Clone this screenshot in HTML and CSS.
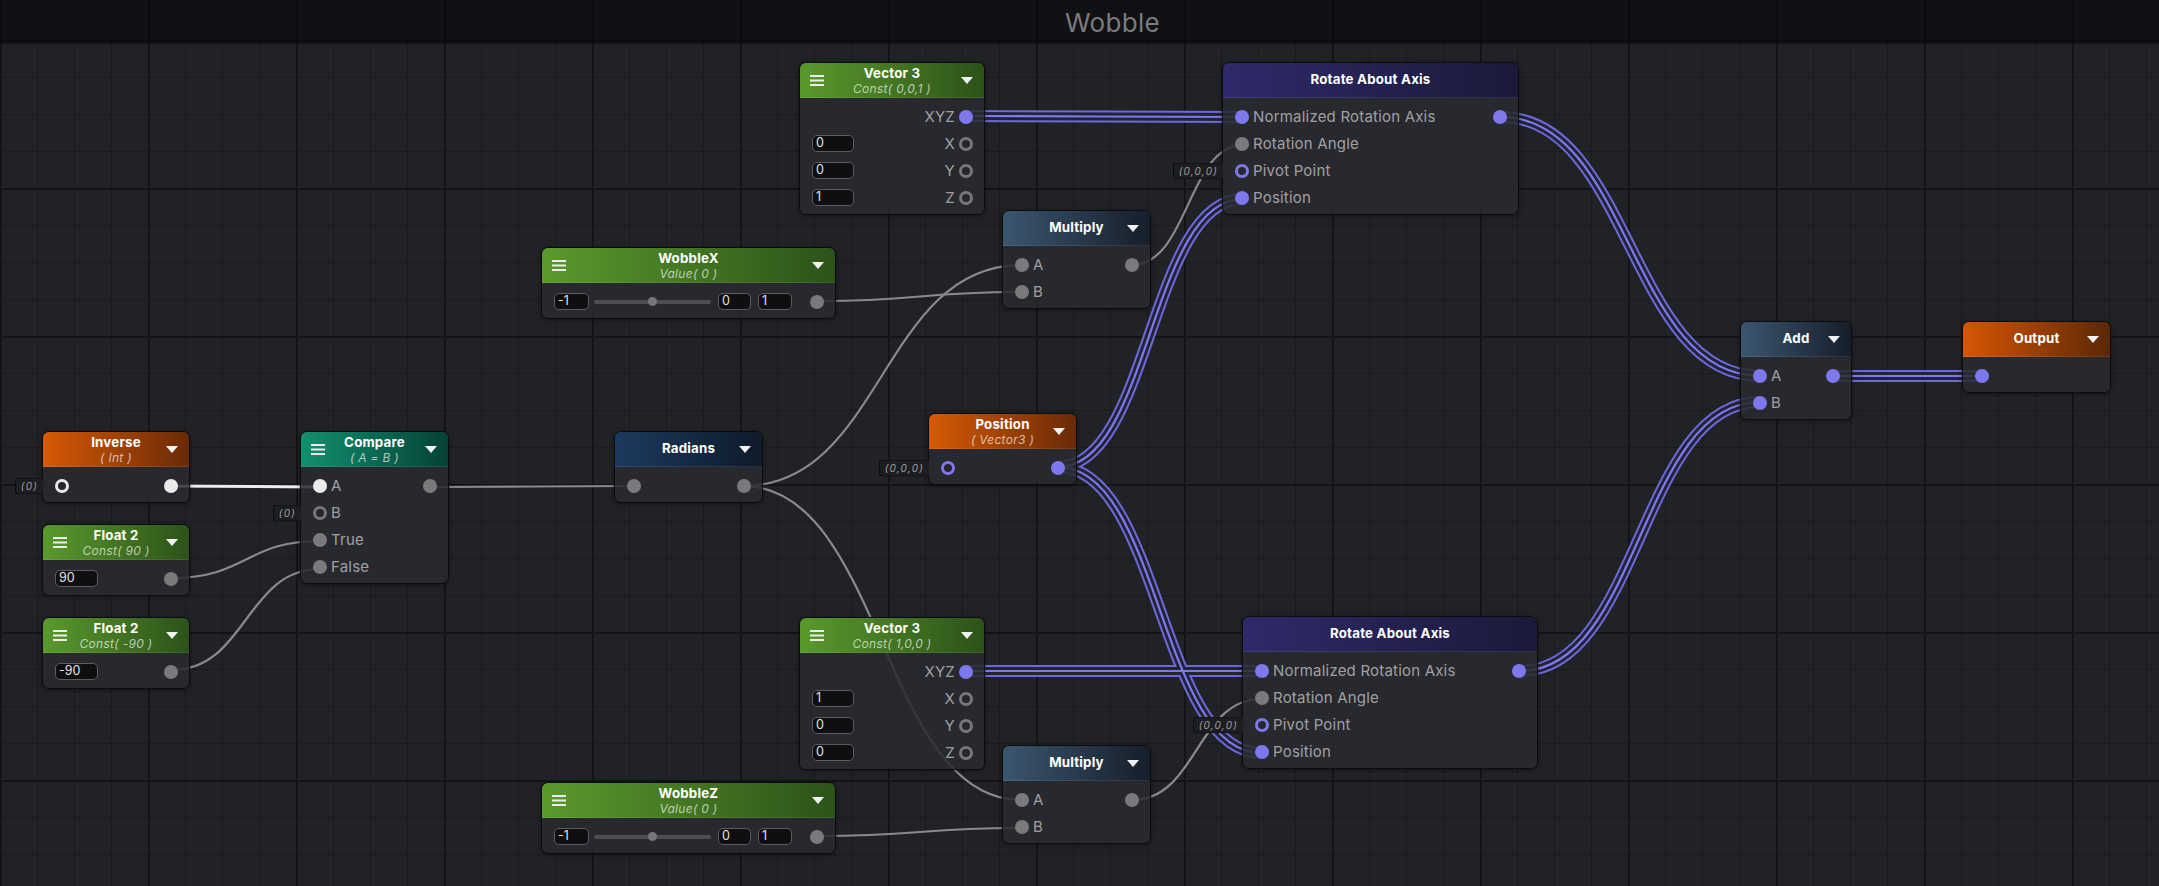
FILE: index.html
```html
<!DOCTYPE html>
<html>
<head>
<meta charset="utf-8">
<link rel="stylesheet" href="styles.css">
</head>
<body>
<div class="editor">
  <div class="titlebar">Wobble</div>
  <div class="graph">
    <svg class="wires" width="2159" height="886" viewBox="0 0 2159 886">
      <defs>
        <path id="p1" d="M966 116 C1104 116 1104 117 1243 117"/>
        <path id="p2" d="M1058 467 C1150 467 1150 199 1243 199"/>
        <path id="p3" d="M1058 467 C1160 467 1160 753 1261 753"/>
        <path id="p4" d="M966 671 L1261 671"/>
        <path id="p5" d="M1501 117 C1630 117 1630 376 1760 376"/>
        <path id="p6" d="M1520 671 C1640 671 1640 402 1760 402"/>
        <path id="p7" d="M1834 376 L1981 376"/>
      </defs>
      <g class="gray">
        <path d="M172 578 C246 578 246 541 320 541"/>
        <path d="M172 670 C246 670 246 569 320 569"/>
        <path d="M431 487 C532 487 532 486 633 486"/>
        <path d="M743 486 C882 486 882 265 1021 265"/>
        <path d="M743 486 C882 486 882 800 1021 800"/>
        <path d="M818 301 C920 301 920 292 1021 292"/>
        <path d="M818 836 C920 836 920 828 1021 828"/>
        <path d="M1132 265 C1188 265 1188 145 1243 145"/>
        <path d="M1132 800 C1197 800 1197 699 1261 699"/>
      </g>
      <path class="white" d="M172 486 L320 487"/>
      <g class="vo">
        <use href="#p1"/><use href="#p2"/><use href="#p3"/><use href="#p4"/><use href="#p5"/><use href="#p6"/><use href="#p7"/>
      </g>
      <g class="vg">
        <use href="#p1"/><use href="#p2"/><use href="#p3"/><use href="#p4"/><use href="#p5"/><use href="#p6"/><use href="#p7"/>
      </g>
      <g class="vc">
        <use href="#p1"/><use href="#p2"/><use href="#p3"/><use href="#p4"/><use href="#p5"/><use href="#p6"/><use href="#p7"/>
      </g>
    </svg>

    <!-- Vector 3 (top) -->
    <div class="node n-vec3a">
      <div class="head two green">
        <span class="menu"><svg width="14" height="11" viewBox="0 0 14 11"><rect y="0" width="14" height="2"/><rect y="4.5" width="14" height="2"/><rect y="9" width="14" height="2"/></svg></span>
        <div class="title"><b>Vector 3</b><i>Const( 0,0,1 )</i></div>
        <span class="drop"></span>
      </div>
      <div class="body">
        <div class="row"><span class="lbl right">XYZ</span><span class="port purple"></span></div>
        <div class="row"><span class="field f42">0</span><span class="lbl right">X</span><span class="port gring"></span></div>
        <div class="row"><span class="field f42">0</span><span class="lbl right">Y</span><span class="port gring"></span></div>
        <div class="row"><span class="field f42">1</span><span class="lbl right">Z</span><span class="port gring"></span></div>
      </div>
    </div>

    <!-- Rotate About Axis (top) -->
    <div class="node n-rota">
      <div class="head indigo">
        <span></span>
        <div class="title"><b>Rotate About Axis</b></div>
        <span></span>
      </div>
      <div class="body">
        <div class="row"><span class="port purple"></span><span class="lbl">Normalized Rotation Axis</span><span class="sp"></span><span class="port purple"></span></div>
        <div class="row"><span class="port gray"></span><span class="lbl">Rotation Angle</span></div>
        <div class="row"><span class="tag">(0,0,0)</span><span class="port pring"></span><span class="lbl">Pivot Point</span></div>
        <div class="row"><span class="port purple"></span><span class="lbl">Position</span></div>
      </div>
    </div>

    <!-- WobbleX -->
    <div class="node n-wobx">
      <div class="head two green">
        <span class="menu"><svg width="14" height="11" viewBox="0 0 14 11"><rect y="0" width="14" height="2"/><rect y="4.5" width="14" height="2"/><rect y="9" width="14" height="2"/></svg></span>
        <div class="title"><b>WobbleX</b><i>Value( 0 )</i></div>
        <span class="drop"></span>
      </div>
      <div class="body">
        <div class="row">
          <span class="field f35">-1</span>
          <span class="slider"><span class="knob"></span></span>
          <span class="field f33">0</span>
          <span class="field f34">1</span>
          <span class="sp"></span>
          <span class="port gray"></span>
        </div>
      </div>
    </div>

    <!-- Multiply (top) -->
    <div class="node n-mula">
      <div class="head slate">
        <span></span>
        <div class="title"><b>Multiply</b></div>
        <span class="drop"></span>
      </div>
      <div class="body">
        <div class="row"><span class="port gray"></span><span class="lbl">A</span><span class="sp"></span><span class="port gray"></span></div>
        <div class="row"><span class="port gray"></span><span class="lbl">B</span></div>
      </div>
    </div>

    <!-- Inverse -->
    <div class="node n-inv">
      <div class="head two orange">
        <span></span>
        <div class="title"><b>Inverse</b><i>( Int )</i></div>
        <span class="drop"></span>
      </div>
      <div class="body">
        <div class="row"><span class="tag">(0)</span><span class="port wring"></span><span class="sp"></span><span class="port white"></span></div>
      </div>
    </div>

    <!-- Float 2 (90) -->
    <div class="node n-f90">
      <div class="head two green">
        <span class="menu"><svg width="14" height="11" viewBox="0 0 14 11"><rect y="0" width="14" height="2"/><rect y="4.5" width="14" height="2"/><rect y="9" width="14" height="2"/></svg></span>
        <div class="title"><b>Float 2</b><i>Const( 90 )</i></div>
        <span class="drop"></span>
      </div>
      <div class="body">
        <div class="row"><span class="field f43">90</span><span class="sp"></span><span class="port gray"></span></div>
      </div>
    </div>

    <!-- Float 2 (-90) -->
    <div class="node n-fm90">
      <div class="head two green">
        <span class="menu"><svg width="14" height="11" viewBox="0 0 14 11"><rect y="0" width="14" height="2"/><rect y="4.5" width="14" height="2"/><rect y="9" width="14" height="2"/></svg></span>
        <div class="title"><b>Float 2</b><i>Const( -90 )</i></div>
        <span class="drop"></span>
      </div>
      <div class="body">
        <div class="row"><span class="field f43">-90</span><span class="sp"></span><span class="port gray"></span></div>
      </div>
    </div>

    <!-- Compare -->
    <div class="node n-cmp">
      <div class="head two teal">
        <span class="menu"><svg width="14" height="11" viewBox="0 0 14 11"><rect y="0" width="14" height="2"/><rect y="4.5" width="14" height="2"/><rect y="9" width="14" height="2"/></svg></span>
        <div class="title"><b>Compare</b><i>( A = B )</i></div>
        <span class="drop"></span>
      </div>
      <div class="body">
        <div class="row"><span class="port white"></span><span class="lbl">A</span><span class="sp"></span><span class="port gray"></span></div>
        <div class="row"><span class="tag">(0)</span><span class="port gring"></span><span class="lbl">B</span></div>
        <div class="row"><span class="port gray"></span><span class="lbl">True</span></div>
        <div class="row"><span class="port gray"></span><span class="lbl">False</span></div>
      </div>
    </div>

    <!-- Radians -->
    <div class="node n-rad">
      <div class="head navy">
        <span></span>
        <div class="title"><b>Radians</b></div>
        <span class="drop"></span>
      </div>
      <div class="body">
        <div class="row"><span class="port gray"></span><span class="sp"></span><span class="port gray"></span></div>
      </div>
    </div>

    <!-- Position -->
    <div class="node n-pos">
      <div class="head two orange">
        <span></span>
        <div class="title"><b>Position</b><i>( Vector3 )</i></div>
        <span class="drop"></span>
      </div>
      <div class="body">
        <div class="row"><span class="tag">(0,0,0)</span><span class="port pring"></span><span class="sp"></span><span class="port purple"></span></div>
      </div>
    </div>

    <!-- Add -->
    <div class="node n-add">
      <div class="head slate">
        <span></span>
        <div class="title"><b>Add</b></div>
        <span class="drop"></span>
      </div>
      <div class="body">
        <div class="row"><span class="port purple"></span><span class="lbl">A</span><span class="sp"></span><span class="port purple"></span></div>
        <div class="row"><span class="port purple"></span><span class="lbl">B</span></div>
      </div>
    </div>

    <!-- Output -->
    <div class="node n-out">
      <div class="head orange2">
        <span></span>
        <div class="title"><b>Output</b></div>
        <span class="drop"></span>
      </div>
      <div class="body">
        <div class="row"><span class="port purple"></span></div>
      </div>
    </div>

    <!-- Vector 3 (bottom) -->
    <div class="node n-vec3b">
      <div class="head two green">
        <span class="menu"><svg width="14" height="11" viewBox="0 0 14 11"><rect y="0" width="14" height="2"/><rect y="4.5" width="14" height="2"/><rect y="9" width="14" height="2"/></svg></span>
        <div class="title"><b>Vector 3</b><i>Const( 1,0,0 )</i></div>
        <span class="drop"></span>
      </div>
      <div class="body">
        <div class="row"><span class="lbl right">XYZ</span><span class="port purple"></span></div>
        <div class="row"><span class="field f42">1</span><span class="lbl right">X</span><span class="port gring"></span></div>
        <div class="row"><span class="field f42">0</span><span class="lbl right">Y</span><span class="port gring"></span></div>
        <div class="row"><span class="field f42">0</span><span class="lbl right">Z</span><span class="port gring"></span></div>
      </div>
    </div>

    <!-- Multiply (bottom) -->
    <div class="node n-mulb">
      <div class="head slate">
        <span></span>
        <div class="title"><b>Multiply</b></div>
        <span class="drop"></span>
      </div>
      <div class="body">
        <div class="row"><span class="port gray"></span><span class="lbl">A</span><span class="sp"></span><span class="port gray"></span></div>
        <div class="row"><span class="port gray"></span><span class="lbl">B</span></div>
      </div>
    </div>

    <!-- WobbleZ -->
    <div class="node n-wobz">
      <div class="head two green">
        <span class="menu"><svg width="14" height="11" viewBox="0 0 14 11"><rect y="0" width="14" height="2"/><rect y="4.5" width="14" height="2"/><rect y="9" width="14" height="2"/></svg></span>
        <div class="title"><b>WobbleZ</b><i>Value( 0 )</i></div>
        <span class="drop"></span>
      </div>
      <div class="body">
        <div class="row">
          <span class="field f35">-1</span>
          <span class="slider"><span class="knob"></span></span>
          <span class="field f33">0</span>
          <span class="field f34">1</span>
          <span class="sp"></span>
          <span class="port gray"></span>
        </div>
      </div>
    </div>

    <!-- Rotate About Axis (bottom) -->
    <div class="node n-rotb">
      <div class="head indigo">
        <span></span>
        <div class="title"><b>Rotate About Axis</b></div>
        <span></span>
      </div>
      <div class="body">
        <div class="row"><span class="port purple"></span><span class="lbl">Normalized Rotation Axis</span><span class="sp"></span><span class="port purple"></span></div>
        <div class="row"><span class="port gray"></span><span class="lbl">Rotation Angle</span></div>
        <div class="row"><span class="tag">(0,0,0)</span><span class="port pring"></span><span class="lbl">Pivot Point</span></div>
        <div class="row"><span class="port purple"></span><span class="lbl">Position</span></div>
      </div>
    </div>
  </div>
</div>
</body>
</html>
```

FILE: styles.css
```css
* { box-sizing: border-box; }

body {
  margin: 0;
  background: #1f2023;
  font-family: Inter, "Noto Sans", "Liberation Sans", sans-serif;
}

.editor {
  position: relative;
  width: 2159px;
  height: 886px;
  overflow: hidden;
  background-color: #212226;
  background-image:
    linear-gradient(to right, #131416 2px, transparent 2px),
    linear-gradient(to bottom, #131416 2px, transparent 2px),
    linear-gradient(to right, #1a1b1e 1px, transparent 1px),
    linear-gradient(to bottom, #1a1b1e 1px, transparent 1px);
  background-size: 148px 148px, 148px 148px, 37px 37px, 37px 37px;
  background-position: 0 40px, 0 40px, 0 40px, 0 40px;
}

.titlebar {
  position: relative;
  z-index: 3;
  height: 44px;
  padding-left: 66px;
  background: rgba(6, 7, 9, 0.62);
  display: flex;
  align-items: center;
  justify-content: center;
  color: #7b7b7d;
  font-size: 26px;
  letter-spacing: 0.3px;
}

.graph {
  position: absolute;
  inset: 0;
}

.wires {
  position: absolute;
  left: 0;
  top: 0;
  fill: none;
}

.wires .gray path { stroke: #8a8a8c; stroke-width: 2.2; }
.wires .white { stroke: #ececec; stroke-width: 3; }
.wires .vo use { stroke: #6e69d8; stroke-width: 12; }
.wires .vg use { stroke: #232336; stroke-width: 8; }
.wires .vc use { stroke: #7f7aec; stroke-width: 2.2; }

/* nodes */
.node {
  position: absolute;
  border: 1px solid #0c0c0e;
  border-radius: 7px;
  background: rgba(42, 43, 48, 0.86);
  box-shadow: 0 1px 4px rgba(0, 0, 0, 0.45);
}

.head {
  height: 35px;
  padding-bottom: 4px;
  display: grid;
  grid-template-columns: 34px 1fr 34px;
  align-items: center;
  border-radius: 6px 6px 0 0;
  box-shadow: inset 0 -1px 0 rgba(255, 255, 255, 0.09);
}

.head .menu, .head .drop { margin-top: 4px; }

.head.two { padding-bottom: 0; }
.head.two .menu, .head.two .drop { margin-top: 0; }

.green  { background: linear-gradient(to right, #5a9a2c, #2c5219); }
.orange { background: linear-gradient(to right, #d65a04, #6a2a06); }
.orange2{ background: linear-gradient(to right, #d85604, #5a2707); }
.teal   { background: linear-gradient(to right, #129070, #054236); }
.navy   { background: linear-gradient(to right, #1c3a5f, #0f1a2a); }
.slate  { background: linear-gradient(to right, #3b5670, #161e29); }
.indigo { background: linear-gradient(to right, #2e2a6a, #1b1939); }

.menu {
  display: flex;
  justify-content: center;
  fill: #ececec;
}

.title {
  grid-column: 2;
  display: flex;
  flex-direction: column;
  align-items: center;
  white-space: nowrap;
}

.title b {
  font-size: 13.3px;
  line-height: 14px;
  font-weight: 700;
  color: #ffffff;
  letter-spacing: 0.2px;
}

.title i {
  font-size: 12px;
  line-height: 15px;
  margin-top: 1px;
  color: rgba(255, 255, 255, 0.66);
  letter-spacing: 0.3px;
}

.drop {
  grid-column: 3;
  justify-self: center;
  width: 0;
  height: 0;
  border-left: 6px solid transparent;
  border-right: 6px solid transparent;
  border-top: 7px solid #f2f2f2;
}

.body {
  padding: 5px 0 3px;
}

.row {
  position: relative;
  height: 27px;
  display: flex;
  align-items: center;
  padding: 0 11px 0 12px;
}

.lbl {
  font-size: 15px;
  color: #a0a0a2;
  margin-left: 4px;
  white-space: nowrap;
  letter-spacing: 0.2px;
}

.lbl.right {
  margin-left: auto;
  margin-right: 4px;
}

.sp { flex: 1; }

.port {
  flex: none;
  width: 14px;
  height: 14px;
  border-radius: 50%;
}

.port.gray   { background: #7a7a7c; }
.port.purple { background: #7d79ec; }
.port.white  { background: #ebebeb; }
.port.pring  { border: 3px solid #7d79ec; background: #26272b; }
.port.gring  { border: 3px solid #77777a; background: #26272b; }
.port.wring  { border: 3px solid #e8e8e8; background: #26272b; }

.field {
  flex: none;
  height: 17px;
  border: 1.5px solid #5c5c5e;
  border-radius: 5px;
  background: #0f0f11;
  color: #e2e2e2;
  font-size: 12.5px;
  line-height: 14px;
  padding-left: 3px;
}

.f42 { width: 42px; }
.f43 { width: 43px; }
.f35 { width: 35px; }
.f33 { width: 33px; margin-left: 7px; }
.f34 { width: 34px; margin-left: 7px; }

.slider {
  position: relative;
  flex: none;
  width: 117px;
  height: 4px;
  margin-left: 5px;
  border-radius: 2px;
  background: #4e4e52;
  display: flex;
  align-items: center;
  justify-content: center;
}

.knob {
  width: 9px;
  height: 9px;
  border-radius: 50%;
  background: #77777a;
}

.tag {
  position: absolute;
  right: 100%;
  top: 50%;
  transform: translateY(-50%);
  height: 17px;
  padding: 0 5px;
  display: flex;
  align-items: center;
  border: 1px solid #0c0c0e;
  border-right: none;
  border-radius: 4px 0 0 4px;
  background: #1d1e21;
  color: #9e9ea0;
  font-size: 10px;
  font-style: italic;
  letter-spacing: 1.2px;
  white-space: nowrap;
}

/* node placement on the graph canvas */
.n-vec3a { left: 799px;  top: 62px;  width: 186px; }
.n-rota  { left: 1222px; top: 62px;  width: 297px; }
.n-wobx  { left: 541px;  top: 247px; width: 295px; }
.n-mula  { left: 1002px; top: 210px; width: 149px; }
.n-inv   { left: 42px;   top: 431px; width: 148px; }
.n-f90   { left: 42px;   top: 524px; width: 148px; }
.n-fm90  { left: 42px;   top: 617px; width: 148px; }
.n-cmp   { left: 300px;  top: 431px; width: 149px; }
.n-rad   { left: 614px;  top: 431px; width: 149px; }
.n-pos   { left: 928px;  top: 413px; width: 149px; }
.n-add   { left: 1740px; top: 321px; width: 112px; }
.n-out   { left: 1962px; top: 321px; width: 149px; }
.n-vec3b { left: 799px;  top: 617px; width: 186px; }
.n-mulb  { left: 1002px; top: 745px; width: 149px; }
.n-wobz  { left: 541px;  top: 782px; width: 295px; }
.n-rotb  { left: 1242px; top: 616px; width: 296px; }
```
